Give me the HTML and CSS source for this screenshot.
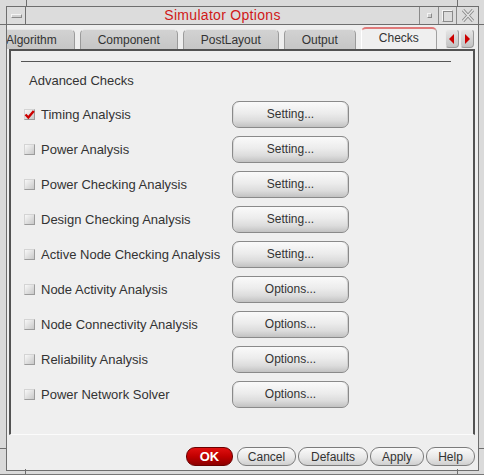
FILE: index.html
```html
<!DOCTYPE html>
<html>
<head>
<meta charset="utf-8">
<link rel="stylesheet" href="styles.css">
</head>
<body>
<div class="win">
  <div class="inner">
    <div class="titlebar">
      <div class="tb-btn tb-min"><span class="glyph-bar"></span></div>
      <div class="tb-title">Simulator Options</div>
      <div class="tb-btn tb-icon"><span class="glyph-dot"></span></div>
      <div class="tb-btn tb-max"><span class="glyph-box"></span></div>
      <div class="tb-btn tb-close">
        <svg width="12" height="13" viewBox="0 0 12 13"><path d="M1 1 L11 12 M11 1 L1 12" stroke="#8a8a8a" stroke-width="3.2" fill="none"/><path d="M1 1 L11 12 M11 1 L1 12" stroke="#e4e4e4" stroke-width="1.4" fill="none"/></svg>
      </div>
    </div>
    <div class="client">
      <div class="tabbar">
        <div class="tabclip">
          <div class="tabs">
            <div class="tab">Algorithm</div>
            <div class="tab">Component</div>
            <div class="tab">PostLayout</div>
            <div class="tab">Output</div>
            <div class="tab active">Checks</div>
          </div>
        </div>
        <div class="arrows">
          <div class="arrow"><svg width="6" height="10" viewBox="0 0 6 10"><path d="M5 0 L0 5 L5 10 Z" fill="#cc0000"/></svg></div>
          <div class="arrow"><svg width="6" height="10" viewBox="0 0 6 10"><path d="M1 0 L6 5 L1 10 Z" fill="#cc0000"/></svg></div>
        </div>
      </div>
      <div class="panel">
        <div class="group">
          <div class="group-title">Advanced Checks</div>
          <div class="rows">
            <div class="row">
              <span class="cb checked"><svg width="11" height="11" viewBox="0 0 11 11"><path d="M1.5 5.5 L4.3 8.5 L9.8 2" stroke="#cc0000" stroke-width="2.4" fill="none"/></svg></span>
              <span class="label">Timing Analysis</span>
              <button class="btn">Setting...</button>
            </div>
            <div class="row"><span class="cb"></span><span class="label">Power Analysis</span><button class="btn">Setting...</button></div>
            <div class="row"><span class="cb"></span><span class="label">Power Checking Analysis</span><button class="btn">Setting...</button></div>
            <div class="row"><span class="cb"></span><span class="label">Design Checking Analysis</span><button class="btn">Setting...</button></div>
            <div class="row"><span class="cb"></span><span class="label">Active Node Checking Analysis</span><button class="btn">Setting...</button></div>
            <div class="row"><span class="cb"></span><span class="label">Node Activity Analysis</span><button class="btn">Options...</button></div>
            <div class="row"><span class="cb"></span><span class="label">Node Connectivity Analysis</span><button class="btn">Options...</button></div>
            <div class="row"><span class="cb"></span><span class="label">Reliability Analysis</span><button class="btn">Options...</button></div>
            <div class="row"><span class="cb"></span><span class="label">Power Network Solver</span><button class="btn">Options...</button></div>
          </div>
        </div>
      </div>
      <div class="actions">
        <button class="pill ok">OK</button>
        <button class="pill w-cancel">Cancel</button>
        <button class="pill w-defaults">Defaults</button>
        <button class="pill w-apply">Apply</button>
        <button class="pill w-help">Help</button>
      </div>
    </div>
  </div>
  <span class="mark mark-tl-v"></span>
  <span class="mark mark-tr-v"></span>
  <span class="mark mark-tl-h"></span>
  <span class="mark mark-tr-h"></span>
  <span class="mark mark-bl-v"></span>
  <span class="mark mark-br-v"></span>
  <span class="mark mark-bl-h"></span>
  <span class="mark mark-br-h"></span>
</div>
</body>
</html>
```

FILE: styles.css
```css
* { box-sizing: border-box; }
html, body { margin: 0; padding: 0; }
body {
  width: 484px;
  height: 475px;
  overflow: hidden;
  font-family: "Liberation Sans", Arial, sans-serif;
  background: #dadada;
}
.win {
  position: relative;
  width: 484px;
  height: 475px;
  padding: 6px 5px 3px 6px;
  background: #dadada;
  border-bottom: 1px solid #777;
}
.inner {
  height: 100%;
  border: 1px solid #6e6e6e;
  display: flex;
  flex-direction: column;
}
.titlebar {
  height: 18px;
  flex: 0 0 18px;
  display: flex;
  border-bottom: 1px solid #6e6e6e;
  background: #dcdcdc;
}
.tb-btn {
  display: flex;
  align-items: center;
  justify-content: center;
  border-right: 1px solid #8a8a8a;
}
.tb-min { width: 19px; border-right: 1px solid #6e6e6e; }
.tb-icon { width: 20px; border-left: 1px solid #8a8a8a; }
.tb-max { width: 18px; }
.tb-close { width: 21px; border-right: none; }
.glyph-bar {
  width: 11px; height: 4px;
  border: 1px solid #8a8a8a;
  border-top-color: #f4f4f4;
  border-left-color: #f4f4f4;
  background: #d0d0d0;
}
.glyph-dot {
  width: 5px; height: 5px;
  border: 1px solid #8a8a8a;
  border-top-color: #f4f4f4;
  border-left-color: #f4f4f4;
  background: #cfcfcf;
}
.glyph-box {
  width: 11px; height: 12px;
  border: 1px solid #8a8a8a;
  border-top-color: #f4f4f4;
  border-left-color: #f4f4f4;
  box-shadow: inset 1px 1px 0 #8a8a8a;
}
.tb-title {
  flex: 1;
  text-align: center;
  color: #d01818;
  font-size: 14px;
  line-height: 17px;
  letter-spacing: 0.3px;
}
.client {
  flex: 1;
  display: flex;
  flex-direction: column;
  background: #eeeeee;
}
.tabbar {
  height: 24px;
  flex: 0 0 24px;
  display: flex;
  align-items: flex-end;
}
.tabclip {
  width: 435px;
  overflow: hidden;
  height: 24px;
  display: flex;
  align-items: flex-end;
}
.tabs {
  display: flex;
  align-items: flex-end;
  gap: 5px;
  margin-left: -19px;
}
.tab {
  flex: 0 0 auto;
  height: 20px;
  padding: 0 17px;
  font-size: 12px;
  line-height: 20px;
  color: #333;
  border: 1px solid #9a9a9a;
  border-bottom: none;
  border-top-color: #e6e6e6;
  border-radius: 5px 5px 0 0;
  background: linear-gradient(#d2d2d2, #c6c6c6);
  white-space: nowrap;
}
.tab.active {
  height: 22px;
  line-height: 19px;
  background: #efefef;
  border-top: 2px solid #e07a7a;
  border-left-color: #ffffff;
  border-right-color: #a0a0a0;
}
.arrows {
  display: flex;
  margin-left: 3px;
  margin-bottom: 1px;
  gap: 1px;
}
.arrow {
  width: 14px;
  height: 19px;
  display: flex;
  align-items: center;
  justify-content: center;
  border: 1px solid #9a9a9a;
  border-top-color: #ececec;
  border-left-color: #ececec;
  border-radius: 4px;
  background: linear-gradient(#e6e6e6, #c2c2c2);
}
.panel {
  height: 386px;
  flex: 0 0 386px;
  margin: 0 3px 0 2px;
  border-top: 2px solid #525252;
  border-left: 2px solid #525252;
  border-right: 2px solid #525252;
  border-bottom: 1px solid #fbfbfb;
  background: #efefef;
  padding: 10px 22px 0 10px;
}
.group {
  border-top: 1px solid #555;
}
.group-title {
  font-size: 13px;
  color: #333;
  line-height: 16px;
  margin: 11px 0 0 8px;
}
.rows {
  margin-top: 8px;
  display: flex;
  flex-direction: column;
}
.row {
  height: 35px;
  display: flex;
  align-items: center;
  padding-left: 3px;
}
.cb {
  width: 11px;
  height: 11px;
  flex: 0 0 11px;
  background: linear-gradient(135deg, #f8f8f8, #c8c8c8);
  border: 1px solid #d4d4d4;
  border-right-color: #9c9c9c;
  border-bottom-color: #9c9c9c;
  display: flex;
  position: relative;
}
.cb svg { position: absolute; left: -1px; top: -1px; }
.label {
  margin-left: 6px;
  width: 191px;
  font-size: 13px;
  color: #333;
  white-space: nowrap;
}
.btn {
  width: 117px;
  height: 27px;
  font-family: "Liberation Sans", Arial, sans-serif;
  font-size: 12px;
  color: #333;
  border: 1px solid #8a8a8a;
  border-radius: 7px;
  background: linear-gradient(#fafafa 0%, #ececec 45%, #dcdcdc 75%, #c2c2c2 100%);
  box-shadow: inset 1px 0 0 #d8d8d8, inset -1px 0 0 #d0d0d0;
  padding: 0 0 2px 0;
}
.actions {
  display: flex;
  justify-content: flex-end;
  gap: 2px;
  padding: 12px 3px 0 0;
}
.pill {
  height: 19px;
  font-family: "Liberation Sans", Arial, sans-serif;
  font-size: 12px;
  color: #333;
  border: 1px solid #7c7c7c;
  border-radius: 9px;
  background: linear-gradient(#fafafa 0%, #e8e8e8 55%, #cfcfcf 100%);
  padding: 0;
}
.pill.ok {
  width: 47px;
  margin-right: 2px;
  color: #fff;
  font-weight: bold;
  font-size: 13px;
  border-color: #6a0000;
  background: linear-gradient(#e01010 0%, #c00000 50%, #8c0000 100%);
}
.w-cancel { width: 59px; }
.w-defaults { width: 70px; }
.w-apply { width: 54px; }
.w-help { width: 49px; }
.mark {
  position: absolute;
  background: #6e6e6e;
}
.mark-tl-v { left: 26px; top: 0; width: 1px; height: 7px; }
.mark-tr-v { left: 457px; top: 0; width: 1px; height: 7px; }
.mark-tl-h { left: 0; top: 24px; width: 6px; height: 1px; }
.mark-tr-h { left: 479px; top: 24px; width: 5px; height: 1px; }
.mark-bl-v { left: 25px; top: 469px; width: 1px; height: 5px; }
.mark-br-v { left: 457px; top: 469px; width: 1px; height: 5px; }
.mark-bl-h { left: 0; top: 448px; width: 6px; height: 1px; }
.mark-br-h { left: 479px; top: 448px; width: 5px; height: 1px; }
```
